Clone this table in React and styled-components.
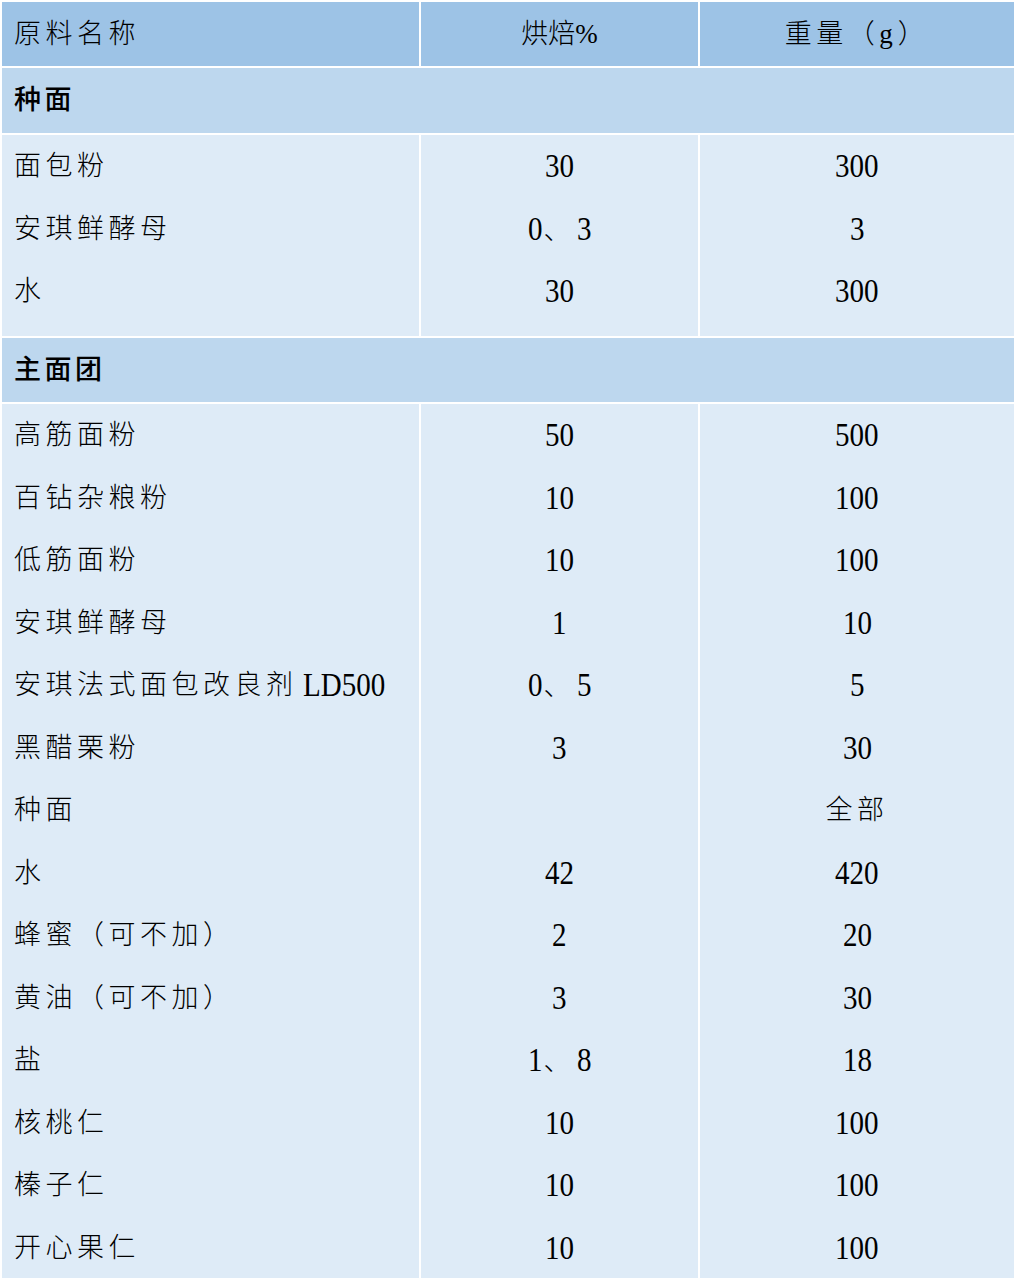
import React from "react";
import styled, {createGlobalStyle} from "styled-components";

const GlobalStyle = createGlobalStyle`
  html, body {
    margin: 0;
    padding: 0;
    background: #ffffff;
  }
  body {
    font-family: "Liberation Serif", "Noto Sans CJK SC", serif;
    color: #000000;
  }
`;

const groups = [
  {
    title: "种面",
    height: 201,
    rows: [
      ["面包粉", "30", "300"],
      ["安琪鲜酵母", "0、3", "3"],
      ["水", "30", "300"],
    ],
  },
  {
    title: "主面团",
    height: 874,
    rows: [
      ["高筋面粉", "50", "500"],
      ["百钻杂粮粉", "10", "100"],
      ["低筋面粉", "10", "100"],
      ["安琪鲜酵母", "1", "10"],
      ["安琪法式面包改良剂", "0、5", "5", "LD500"],
      ["黑醋栗粉", "3", "30"],
      ["种面", "", "全部"],
      ["水", "42", "420"],
      ["蜂蜜（可不加）", "2", "20"],
      ["黄油（可不加）", "3", "30"],
      ["盐", "1、8", "18"],
      ["核桃仁", "10", "100"],
      ["榛子仁", "10", "100"],
      ["开心果仁", "10", "100"],
    ],
  },
];

// numbers like "0、3": the digits get the narrow serif, the comma stays CJK
const Amount = ({value}) => {
  const parts = value.split("、");
  if (parts.length === 1) return <Num>{value}</Num>;
  return (
    <span>
      <Num>{parts[0]}</Num>
      <Label $gap="5px">、</Label>
      <Num>{parts[1]}</Num>
    </span>
  );
};

const RecipeTable = () => {
  return (
    <Table>
      <Cell $tone="head" $height={64}>
        <Label>原料名称</Label>
      </Cell>
      <Cell $tone="head" $height={64} $center>
        <Label $gap="0">烘焙</Label>
        <Num $small>%</Num>
      </Cell>
      <Cell $tone="head" $height={64} $center>
        <Label>重量（</Label>
        <Num $small $after>g</Num>
        <Label>）</Label>
      </Cell>

      {groups.map((group, gi) => (
        <React.Fragment key={group.title}>
          <Section $height={gi === 0 ? 65 : 64}>
            <Label $bold $gap="3.5px">{group.title}</Label>
          </Section>
          <Cell $tone="body" $height={group.height} $stack>
            {group.rows.map((row, i) => (
              <Line key={i}>
                <Label>{row[0]}</Label>
                {row[3] && <Num $code>{row[3]}</Num>}
              </Line>
            ))}
          </Cell>
          <Cell $tone="body" $height={group.height} $stack>
            {group.rows.map((row, i) => (
              <Line key={i} $center>
                {row[1] && <Amount value={row[1]} />}
              </Line>
            ))}
          </Cell>
          <Cell $tone="body" $height={group.height} $stack>
            {group.rows.map((row, i) => (
              <Line key={i} $center>
                {/^[0-9]/.test(row[2]) ? <Amount value={row[2]} /> : <Label>{row[2]}</Label>}
              </Line>
            ))}
          </Cell>
        </React.Fragment>
      ))}
    </Table>
  );
};

const tones = {
  head: "#9dc3e6",
  section: "#bdd7ee",
  body: "#deebf7",
};

const Table = styled.div`
  display: grid;
  grid-template-columns: 417px 277px 1fr;
  column-gap: 2px;
  row-gap: 2px;
  padding: 2px;
  width: 1016px;
  box-sizing: border-box;
  background: #ffffff;
`;

const Cell = styled.div`
  background: ${(p) => tones[p.$tone]};
  height: ${(p) => p.$height}px;
  box-sizing: border-box;
  display: flex;
  flex-direction: ${(p) => (p.$stack ? "column" : "row")};
  align-items: ${(p) => (p.$stack ? "stretch" : "center")};
  justify-content: ${(p) => (p.$center && !p.$stack ? "center" : "flex-start")};
  padding: ${(p) => (p.$stack || p.$center ? "0" : "0 0 0 12px")};
  overflow: hidden;
`;

const Section = styled.div`
  grid-column: 1 / -1;
  background: ${tones.section};
  height: ${(p) => p.$height}px;
  display: flex;
  align-items: center;
  padding-left: 12px;
`;

const Line = styled.div`
  height: 62.5px;
  flex: 0 0 62.5px;
  box-sizing: border-box;
  padding-top: 1px;
  display: flex;
  align-items: center;
  justify-content: ${(p) => (p.$center ? "center" : "flex-start")};
  padding-left: ${(p) => (p.$center ? "0" : "12px")};
`;

const Label = styled.span`
  font-family: "Liberation Serif", "Noto Sans CJK SC", serif;
  font-size: 27px;
  letter-spacing: ${(p) => p.$gap || "4.5px"};
  font-weight: ${(p) => (p.$bold ? 500 : 300)};
  white-space: nowrap;
  line-height: 1;
`;

const Num = styled.span`
  display: inline-block;
  font-family: "Liberation Serif", "Noto Sans CJK SC", serif;
  font-size: ${(p) => (p.$small ? 27 : 33)}px;
  white-space: nowrap;
  line-height: 1;
  transform: scaleX(${(p) => (p.$small ? 1 : 0.88)});
  transform-origin: ${(p) => (p.$code ? "left center" : "center")};
  margin-left: ${(p) => (p.$code ? "5px" : "0")};
  margin-right: ${(p) => (p.$after ? "5px" : "0")};
`;

const App = () => (
  <>
    <GlobalStyle />
    <RecipeTable />
  </>
);

export default App;
